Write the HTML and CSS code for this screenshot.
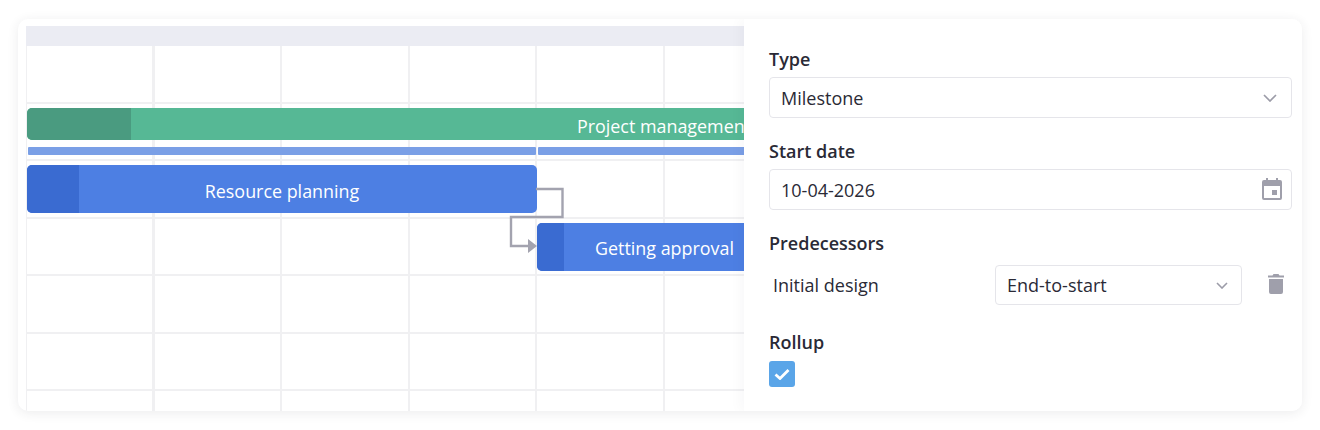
FILE: index.html
```html
<!DOCTYPE html>
<html>
<head>
    <title>Gantt task</title>
    <link rel="stylesheet" href="styles.css">
</head>
<body>

<div class="card">
    <div class="chart">
        <div class="chart-head"></div>
        <div class="chart-body">
            <div class="grid-row first"></div>
            <div class="grid-row"></div>
            <div class="grid-row"></div>
            <div class="grid-row"></div>
            <div class="grid-row"></div>
            <div class="grid-row"></div>

            <div class="bar green"><span class="done"></span><span class="bar-text">Project management</span></div>
            <div class="rollup r1"></div>
            <div class="rollup r2"></div>
            <div class="bar blue b1"><span class="done"></span><span class="bar-text">Resource planning</span></div>
            <div class="bar blue b2"><span class="done"></span><span class="bar-text">Getting approval</span></div>

            <svg class="link" width="54" height="60" viewBox="0 0 54 60">
                <path d="M26 1H52.500V29H1V58H20" fill="none" stroke="#a3a3af" stroke-width="2.400"/>
                <path d="M18 51L27 58L18 65Z" fill="#a3a3af"/>
            </svg>
        </div>
    </div>

    <div class="panel">
        <div class="label">Type</div>
        <div class="select">
            <span>Milestone</span>
            <svg class="chev" width="14" height="8" viewBox="0 0 14 8"><path d="M1 1L7 7L13 1" fill="none" stroke="#9c9ca8" stroke-width="1.7"/></svg>
        </div>

        <div class="label">Start date</div>
        <div class="select">
            <span>10-04-2026</span>
            <svg class="cal" width="22" height="24" viewBox="0 0 22 24">
                <path fill="#9f9fab" d="M5 1h2v2h8V1h2v2h2a2 2 0 0 1 2 2v16a2 2 0 0 1-2 2H3a2 2 0 0 1-2-2V5a2 2 0 0 1 2-2h2zM3 9v12h16V9z"/>
                <rect fill="#9f9fab" x="11" y="13" width="5" height="5"/>
            </svg>
        </div>

        <div class="label">Predecessors</div>
        <div class="pred-row">
            <span class="pred-name">Initial design</span>
            <div class="select small">
                <span>End-to-start</span>
                <svg class="chev" width="12" height="7" viewBox="0 0 12 7"><path d="M1 1L6 6L11 1" fill="none" stroke="#9c9ca8" stroke-width="1.6"/></svg>
            </div>
            <svg class="trash" width="16" height="20" viewBox="0 0 16 20">
                <path fill="#9f9fab" d="M5.500 0h5l1 1.500H16v2H0v-2h4.500zM1 5h14v13a2 2 0 0 1-2 2H3a2 2 0 0 1-2-2z"/>
            </svg>
        </div>

        <div class="label">Rollup</div>
        <div class="check">
            <svg width="16" height="12" viewBox="0 0 16 12"><path d="M1.500 6.500L6 10.500L14.500 2" fill="none" stroke="#fff" stroke-width="2.800"/></svg>
        </div>
    </div>
</div>

</body>
</html>
```

FILE: styles.css
```css
/* page */
body {
    margin: 0;
    background: #fff;
    font-family: "Open Sans", "Noto Sans", sans-serif;
    color: #2a2a36;
}

.card {
    display: flex;
    width: 1284px;
    height: 392px;
    margin: 19px 18px;
    background: #fff;
    border-radius: 10px;
    box-shadow: 0 2px 12px rgba(40, 40, 60, 0.09);
    overflow: hidden;
}

/* gantt */
.chart {
    width: 718px;
    margin: 7px 0 0 8px;
    overflow: hidden;
}

.chart-head {
    height: 20px;
    background: #ebecf3;
}

.chart-body {
    position: relative;
    height: 365px;
    border-left: 1px solid #f0f0f2;
    background-image: repeating-linear-gradient(to right, transparent 0, transparent 125.5px, #f0f0f2 125.5px, #f0f0f2 127.5px);
}

.grid-row {
    height: 55.400px;
    border-bottom: 2px solid #f0f0f2;
}

.grid-row.first {
    height: 56px;
}

.bar {
    position: absolute;
    overflow: hidden;
    display: flex;
    align-items: center;
    justify-content: center;
    box-sizing: border-box;
    padding-top: 4px;
    border-radius: 5px;
    color: #fff;
    font-size: 17.900px;
}

.bar-text {
    position: relative;
}

.done {
    position: absolute;
    left: 0;
    top: 0;
    bottom: 0;
}

.green {
    left: 0;
    top: 62px;
    width: 1274px;
    height: 32px;
    background: #56b895;
}

.green .done {
    width: 104px;
    background: #4a9b80;
}

.blue {
    height: 48px;
    background: #4d7fe3;
}

.blue .done {
    background: #3a6bd1;
}

.b1 {
    left: 0;
    top: 119px;
    width: 510px;
}

.b1 .done {
    width: 52px;
}

.b2 {
    left: 510px;
    top: 177px;
    width: 255px;
    padding-top: 2px;
}

.b2 .done {
    width: 27px;
}

.rollup {
    position: absolute;
    top: 101px;
    height: 8px;
    background: #7a9fe6;
    border-radius: 1px;
}

.r1 {
    left: 1px;
    width: 508px;
}

.r2 {
    left: 511px;
    width: 300px;
}

.link {
    position: absolute;
    left: 483px;
    top: 142px;
    overflow: visible;
}

/* panel */
.panel {
    position: relative;
    width: 558px;
    box-sizing: border-box;
    padding: 28px 10px 0 25px;
    background: #fff;
    box-shadow: -4px 0 12px rgba(40, 40, 60, 0.03);
}

.label {
    height: 26px;
    font-size: 18px;
    font-weight: 600;
    line-height: 24px;
}

.select {
    display: flex;
    align-items: center;
    justify-content: space-between;
    height: 41px;
    box-sizing: border-box;
    margin: 4px 0 21px;
    padding: 0 11px;
    background: #fff;
    border: 1px solid #e5e5ea;
    border-radius: 4px;
    font-size: 18px;
}

.chev {
    margin-right: 3px;
}

.cal {
    margin: -2px -3px 0 0;
}

.pred-row {
    display: flex;
    align-items: center;
    margin: 8px 0 25px;
}

.pred-name {
    width: 222px;
    padding-left: 4px;
    font-size: 18px;
}

.select.small {
    width: 247px;
    height: 40px;
    margin: 0;
}

.small .chev {
    margin-right: 2px;
}

.trash {
    margin: -2px 0 0 26px;
}

.check {
    display: flex;
    align-items: center;
    justify-content: center;
    width: 26px;
    height: 26px;
    margin-top: 5px;
    background: #5aa5e8;
    border-radius: 3px;
}
```
